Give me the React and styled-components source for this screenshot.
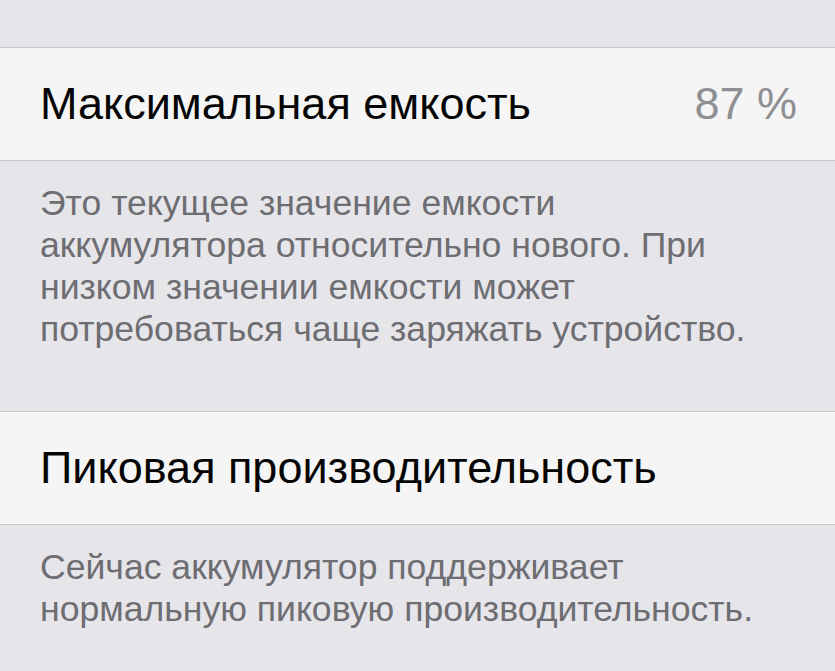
import React from "react";
import styled, { createGlobalStyle } from "styled-components";

const GlobalStyle = createGlobalStyle`
  html, body {
    margin: 0;
    padding: 0;
    background: #e6e5ea;
  }
  body {
    font-family: "Liberation Sans", Arial, sans-serif;
    -webkit-font-smoothing: antialiased;
  }
`;

const Screen = styled.div`
  width: 835px;
  height: 671px;
  overflow: hidden;
  background: #e6e5ea;
  padding-top: 47px;
  box-sizing: border-box;
`;

const Group = styled.div`
  background: #f5f5f5;
  border-top: 1px solid #c8c7cc;
  border-bottom: 1px solid #c8c7cc;
`;

const Row = styled.div`
  height: 112px;
  display: flex;
  align-items: center;
  justify-content: space-between;
  padding: 0 38px 0 40px;
`;

const Label = styled.span`
  font-size: 45px;
  color: #050505;
`;

const Detail = styled.span`
  font-size: 45px;
  color: #8e8e93;
`;

const Footer = styled.div`
  padding: 21px 40px 0;
  height: ${(props) => props.height}px;
  box-sizing: border-box;
  font-size: 35.6px;
  line-height: 42px;
  color: #6d6d72;
`;

const Line = styled.div`
  white-space: nowrap;
`;

const sections = [
  {
    label: "Максимальная емкость",
    detail: "87 %",
    footerHeight: 250,
    footer: [
      "Это текущее значение емкости",
      "аккумулятора относительно нового. При",
      "низком значении емкости может",
      "потребоваться чаще заряжать устройство.",
    ],
  },
  {
    label: "Пиковая производительность",
    footerHeight: 160,
    footer: [
      "Сейчас аккумулятор поддерживает",
      "нормальную пиковую производительность.",
    ],
  },
];

const App = () => {
  return (
    <Screen>
      <GlobalStyle />
      {sections.map((section) => (
        <React.Fragment key={section.label}>
          <Group>
            <Row>
              <Label>{section.label}</Label>
              {section.detail && <Detail>{section.detail}</Detail>}
            </Row>
          </Group>
          <Footer height={section.footerHeight}>
            {section.footer.map((line) => (
              <Line key={line}>{line}</Line>
            ))}
          </Footer>
        </React.Fragment>
      ))}
    </Screen>
  );
};

export default App;
